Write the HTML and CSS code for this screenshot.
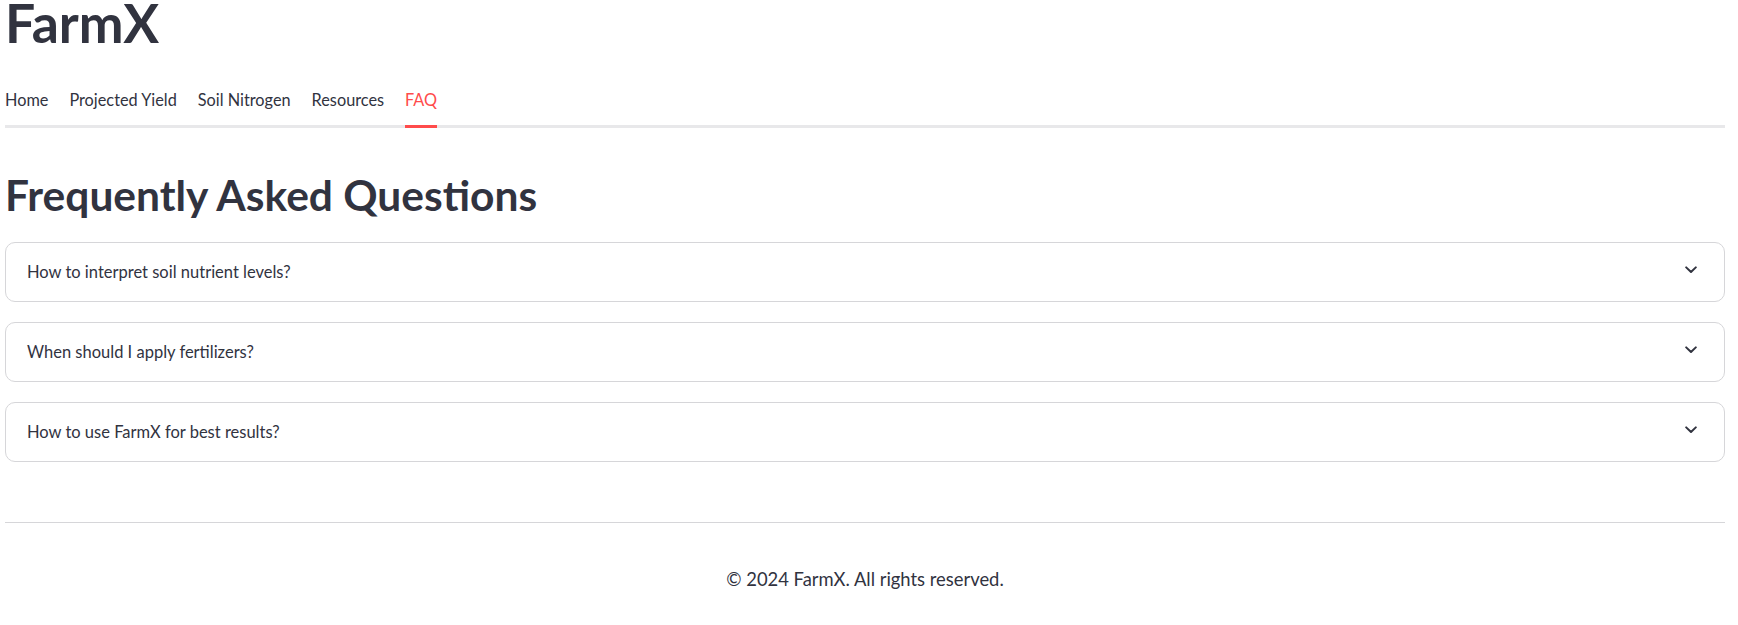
FILE: index.html
```html
<!DOCTYPE html>
<html lang="en">
<head>
<meta charset="utf-8">
<title>FarmX</title>
<link rel="stylesheet" href="styles.css">
</head>
<body>
<main class="page">
  <h1 class="brand">FarmX</h1>
  <nav class="tabs">
    <span class="tab">Home</span>
    <span class="tab">Projected Yield</span>
    <span class="tab">Soil Nitrogen</span>
    <span class="tab">Resources</span>
    <span class="tab tab-active">FAQ</span>
  </nav>
  <h2 class="section-title">Frequently Asked Questions</h2>
  <div class="faq-list">
    <div class="faq-item">
      <span class="faq-q">How to interpret soil nutrient levels?</span>
      <svg class="chev" width="12" height="8" viewBox="0 0 12 8"><path d="M1.2 1.4 L6 6 L10.8 1.4" fill="none" stroke="#31333f" stroke-width="2" stroke-linecap="round" stroke-linejoin="round"/></svg>
    </div>
    <div class="faq-item">
      <span class="faq-q">When should I apply fertilizers?</span>
      <svg class="chev" width="12" height="8" viewBox="0 0 12 8"><path d="M1.2 1.4 L6 6 L10.8 1.4" fill="none" stroke="#31333f" stroke-width="2" stroke-linecap="round" stroke-linejoin="round"/></svg>
    </div>
    <div class="faq-item">
      <span class="faq-q">How to use FarmX for best results?</span>
      <svg class="chev" width="12" height="8" viewBox="0 0 12 8"><path d="M1.2 1.4 L6 6 L10.8 1.4" fill="none" stroke="#31333f" stroke-width="2" stroke-linecap="round" stroke-linejoin="round"/></svg>
    </div>
  </div>
  <hr class="divider">
  <footer class="footer">© 2024 FarmX. All rights reserved.</footer>
</main>
</body>
</html>
```
FILE: styles.css
```css
html, body {
  margin: 0;
  padding: 0;
  background: #ffffff;
}
body {
  font-family: Lato, "Noto Sans", sans-serif;
  color: #31333f;
}
.page {
  padding: 0 13px 0 5px;
}
.brand {
  margin: 0;
  font-size: 53.5px;
  font-weight: 700;
  line-height: 45px;
  height: 45px;
}
.tabs {
  margin-top: 43px;
  display: flex;
  gap: 21px;
  border-bottom: 3px solid #e8e8ea;
}
.tab {
  font-size: 16.3px;
  line-height: 24px;
  padding-bottom: 13px;
  margin-bottom: -3px;
  border-bottom: 3px solid transparent;
  white-space: nowrap;
}
.tab-active {
  color: #ff4b4b;
  border-bottom-color: #ff4b4b;
}
.section-title {
  margin: 42px 0 0;
  font-size: 42.5px;
  font-weight: 700;
  line-height: 50px;
}
.faq-list {
  margin-top: 22px;
  display: flex;
  flex-direction: column;
  gap: 20px;
}
.faq-item {
  box-sizing: border-box;
  height: 60px;
  border: 1px solid #d6d6d9;
  border-radius: 10px;
  display: flex;
  align-items: center;
  justify-content: space-between;
  padding: 0 27px 0 21px;
}
.faq-q {
  font-size: 16.5px;
  line-height: 24px;
}
.chev {
  display: block;
  margin-bottom: 4px;
}
.divider {
  margin: 60px 0 0;
  border: 0;
  border-top: 1px solid #d6d6d9;
  height: 0;
}
.footer {
  margin-top: 44px;
  text-align: center;
  font-size: 18.4px;
  line-height: 24px;
}
```
